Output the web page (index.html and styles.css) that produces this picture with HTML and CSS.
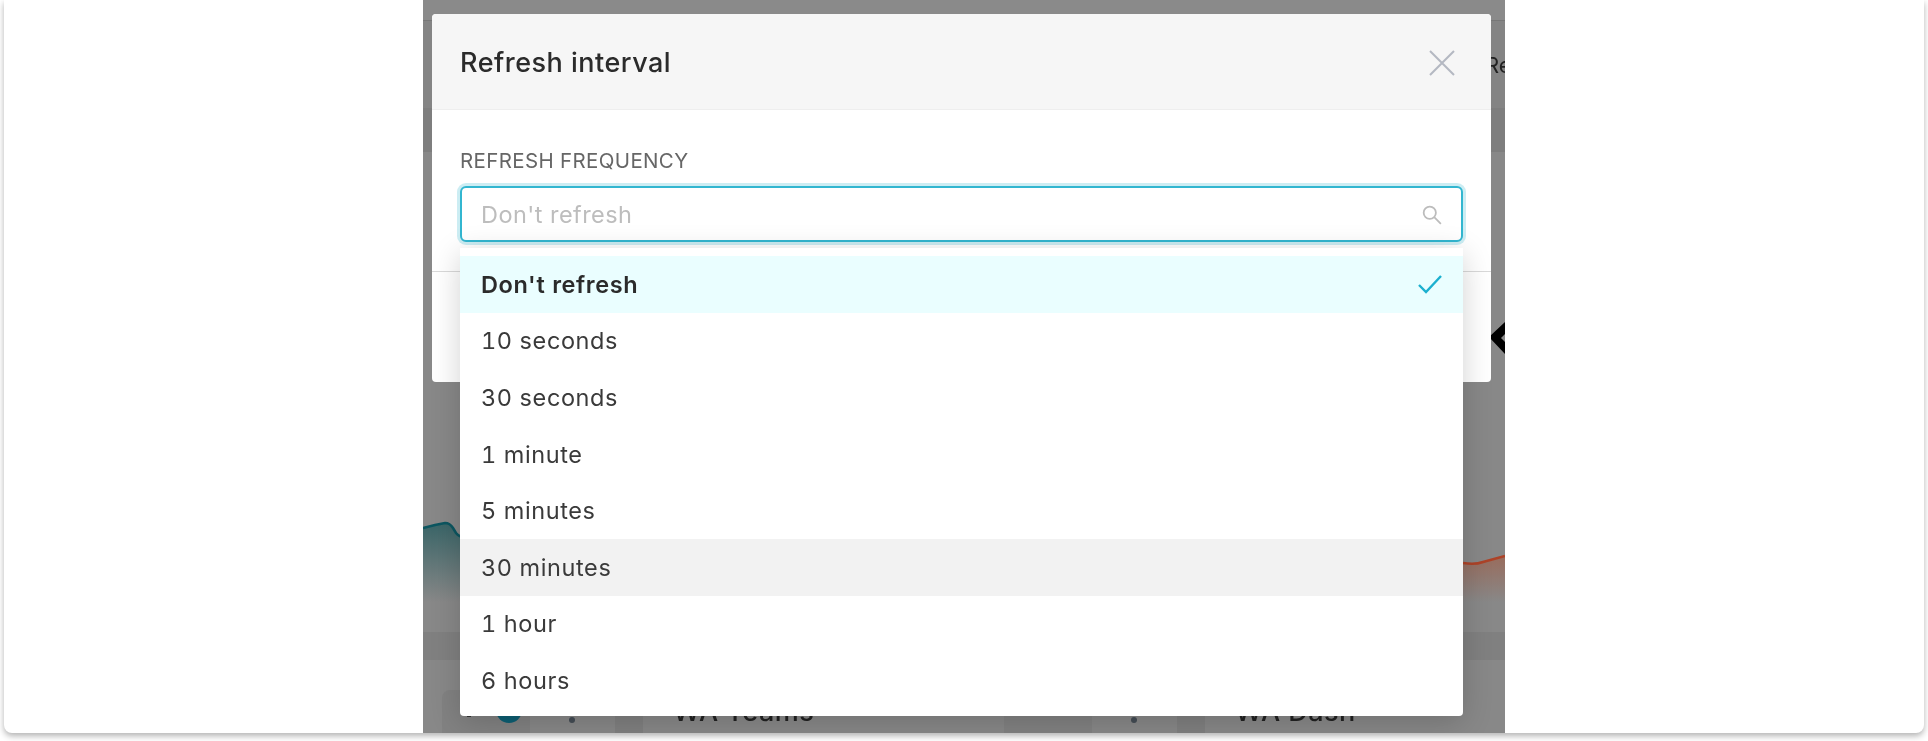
FILE: index.html
```html
<!DOCTYPE html>
<html lang="en">
<head>
    <meta charset="UTF-8">
    <title>Refresh interval</title>
    <link rel="stylesheet" href="styles.css">
</head>
<body>
    <div class="window">
        <div class="stage">
            <div class="dash">
                <div class="dash-top"></div>
                <div class="dash-head"><span>Refresh</span></div>
                <div class="dash-tabs"></div>
                <div class="dash-chart">
                    <svg width="1082" height="480" viewBox="0 0 1082 480">
                        <defs>
                            <linearGradient id="tealFade" x1="0" y1="0" x2="0" y2="1">
                                <stop offset="0" stop-color="#2c5f62" stop-opacity=".85"/>
                                <stop offset="1" stop-color="#2c5f62" stop-opacity="0"/>
                            </linearGradient>
                            <linearGradient id="redFade" x1="0" y1="0" x2="0" y2="1">
                                <stop offset="0" stop-color="#a0604a" stop-opacity=".7"/>
                                <stop offset="1" stop-color="#a0604a" stop-opacity="0"/>
                            </linearGradient>
                        </defs>
                        <path d="M0 376 L12 373 L22 371 Q27 371 30 376 L33 381 Q36 385 42 385 L42 450 L0 450Z" fill="url(#tealFade)"/>
                        <path d="M0 376 L12 373 L22 371 Q27 371 30 376 L33 381 Q36 385 42 385" fill="none" stroke="#0c5660" stroke-width="2.5"/>
                        <path d="M1040 411 Q1052 413 1060 410 L1082 404 L1082 450 L1040 450Z" fill="url(#redFade)"/>
                        <path d="M1040 411 Q1052 413 1060 410 L1082 404" fill="none" stroke="#ad4328" stroke-width="2.5"/>
                        <path d="M1066 185 L1082 170 L1082 182 L1078 186 L1082 190 L1082 202Z" fill="#000"/>
                    </svg>
                </div>
                <div class="dash-band"></div>
                <div class="dash-row">
                    <div class="team">
                        <div class="team-pill">
                            <span class="team-caret"></span>
                            <span class="team-avatar"></span>
                        </div>
                        <span class="team-dot"></span>
                        <span class="team-strip"></span>
                        <span class="team-name">WA Teams</span>
                    </div>
                    <div class="team">
                        <div class="team-pill"></div>
                        <span class="team-dot"></span>
                        <span class="team-strip"></span>
                        <span class="team-name">WA Dash</span>
                    </div>
                </div>
            </div>

            <div class="modal">
                <div class="modal-header">
                    <h2 class="modal-title">Refresh interval</h2>
                    <svg class="modal-close" width="26" height="26" viewBox="0 0 26 26">
                        <path d="M1 1 L25 25 M25 1 L1 25" fill="none" stroke="#b4b8c2" stroke-width="2"/>
                    </svg>
                </div>
                <div class="modal-body">
                    <label class="field-label" for="frequency">REFRESH FREQUENCY</label>
                    <div class="field">
                        <input class="field-input" type="text" id="frequency" placeholder="Don't refresh" autocomplete="off">
                        <svg class="field-search" width="20" height="20" viewBox="0 0 18 18">
                            <circle cx="7" cy="7" r="5.5" fill="none" stroke="#bcbcbc" stroke-width="1.6"/>
                            <path d="M11 11 L17 17" stroke="#bcbcbc" stroke-width="1.6"/>
                        </svg>
                        <ul class="menu">
                            <li class="menu-item selected">
                                Don't refresh
                                <svg width="24" height="20" viewBox="0 0 24 20">
                                    <path d="M1 11 L8 18 L23 2" fill="none" stroke="#1cb0cf" stroke-width="2.4"/>
                                </svg>
                            </li>
                            <li class="menu-item">10 seconds</li>
                            <li class="menu-item">30 seconds</li>
                            <li class="menu-item">1 minute</li>
                            <li class="menu-item">5 minutes</li>
                            <li class="menu-item hovered">30 minutes</li>
                            <li class="menu-item">1 hour</li>
                            <li class="menu-item">6 hours</li>
                        </ul>
                    </div>
                </div>
                <div class="modal-footer"></div>
            </div>
        </div>
    </div>
</body>
</html>
```

FILE: styles.css
```css
* {
    box-sizing: border-box;
}

html,
body {
    margin: 0;
    height: 100%;
    overflow: hidden;
    background: #fff;
}

body {
    font-family: Inter, "Noto Sans", sans-serif;
    color: #333;
}

.window {
    height: 733px;
    margin-left: 4px;
    width: 1920px;
    display: flex;
    justify-content: center;
    background: #fff;
    border-radius: 0 0 8px 8px;
    box-shadow: 0 3px 6px rgba(0, 0, 0, .3);
}

.stage {
    position: relative;
    width: 1082px;
    height: 733px;
    overflow: hidden;
    filter: blur(.6px);
}

.dash {
    display: flex;
    flex-direction: column;
    height: 100%;
    background: #888;
}

.dash-top {
    height: 20px;
    background: #8a8a8a;
}

.dash-head {
    height: 88px;
    padding-left: 1062px;
    display: flex;
    align-items: center;
    background: #848484;
    border-top: 1px solid #777;
    color: #222;
    font-size: 22px;
    white-space: nowrap;
    overflow: hidden;
}

.dash-tabs {
    height: 44px;
    background: #7e7e7e;
}

.dash-chart {
    height: 480px;
}

.dash-chart svg {
    display: block;
}

.dash-band {
    height: 28px;
    background: #808080;
}

.dash-row {
    flex: 1;
    display: flex;
    align-items: center;
    padding-top: 30px;
}

.team {
    flex: 0 0 562px;
    display: flex;
    align-items: center;
    padding-left: 19px;
}

.team-pill {
    position: relative;
    flex: 0 0 88px;
    height: 43px;
    background: #828282;
    border-radius: 8px 8px 0 0;
}

.team-caret {
    position: absolute;
    left: 25px;
    top: 24px;
    width: 4px;
    height: 3px;
    background: #333;
}

.team-avatar {
    position: absolute;
    left: 54px;
    top: 7px;
    width: 26px;
    height: 26px;
    border-radius: 50%;
    background: #0d5f73;
}

.team-dot {
    flex: 0 0 6px;
    height: 6px;
    margin: 17px 0 0 39px;
    border-radius: 50%;
    background: #454d55;
}

.team-strip {
    flex: 0 0 28px;
    align-self: stretch;
    margin-left: 40px;
    background: #808080;
}

.team-name {
    margin-left: 30px;
    color: #222;
    font-size: 27px;
    font-weight: 500;
    letter-spacing: .5px;
    white-space: nowrap;
}

.modal {
    position: absolute;
    left: 9px;
    top: 14px;
    width: 1059px;
    background: #fff;
    border-radius: 4px;
}

.modal-header {
    height: 96px;
    padding: 2px 36px 0 28px;
    display: flex;
    align-items: center;
    justify-content: space-between;
    background: #f6f6f6;
    border-bottom: 1px solid #eee;
    border-radius: 4px 4px 0 0;
}

.modal-title {
    margin: 0;
    font-size: 27px;
    font-weight: 500;
    letter-spacing: .5px;
    color: #2b2b2b;
}

.modal-body {
    height: 161px;
    padding: 39px 28px 0;
}

.field-label {
    display: block;
    height: 24px;
    line-height: 24px;
    margin-bottom: 13px;
    font-size: 20.5px;
    letter-spacing: .35px;
    color: #666;
}

.field {
    position: relative;
}

.field-input {
    display: block;
    width: 100%;
    height: 56px;
    padding: 0 19px;
    font-family: inherit;
    font-size: 23.5px;
    letter-spacing: .45px;
    color: #333;
    background: #fff;
    border: 2px solid #32b6d0;
    border-radius: 6px;
    outline: 0;
    box-shadow: 0 0 0 3px rgba(50, 182, 208, .25);
}

.field-input::placeholder {
    color: #bdbdbd;
}

.field-search {
    position: absolute;
    right: 21px;
    top: 19px;
}

.menu {
    position: absolute;
    left: 0;
    right: 0;
    top: 62px;
    margin: 0;
    padding: 8px 0 7px;
    list-style: none;
    background: #fff;
    border-radius: 0 0 4px 4px;
    box-shadow: 0 6px 30px rgba(0, 0, 0, .18);
}

.menu-item {
    height: 56.6px;
    padding: 0 21px;
    display: flex;
    align-items: center;
    justify-content: space-between;
    font-size: 23.5px;
    letter-spacing: .6px;
    font-variant-numeric: tabular-nums;
    color: #3a3a3a;
}

.menu-item.selected {
    background: #eafeff;
    font-weight: 600;
    color: #2b2b2b;
}

.menu-item.hovered {
    background: #f2f2f2;
}

.modal-footer {
    height: 111px;
    border-top: 1px solid #d9d9d9;
    border-radius: 0 0 4px 4px;
}
```
